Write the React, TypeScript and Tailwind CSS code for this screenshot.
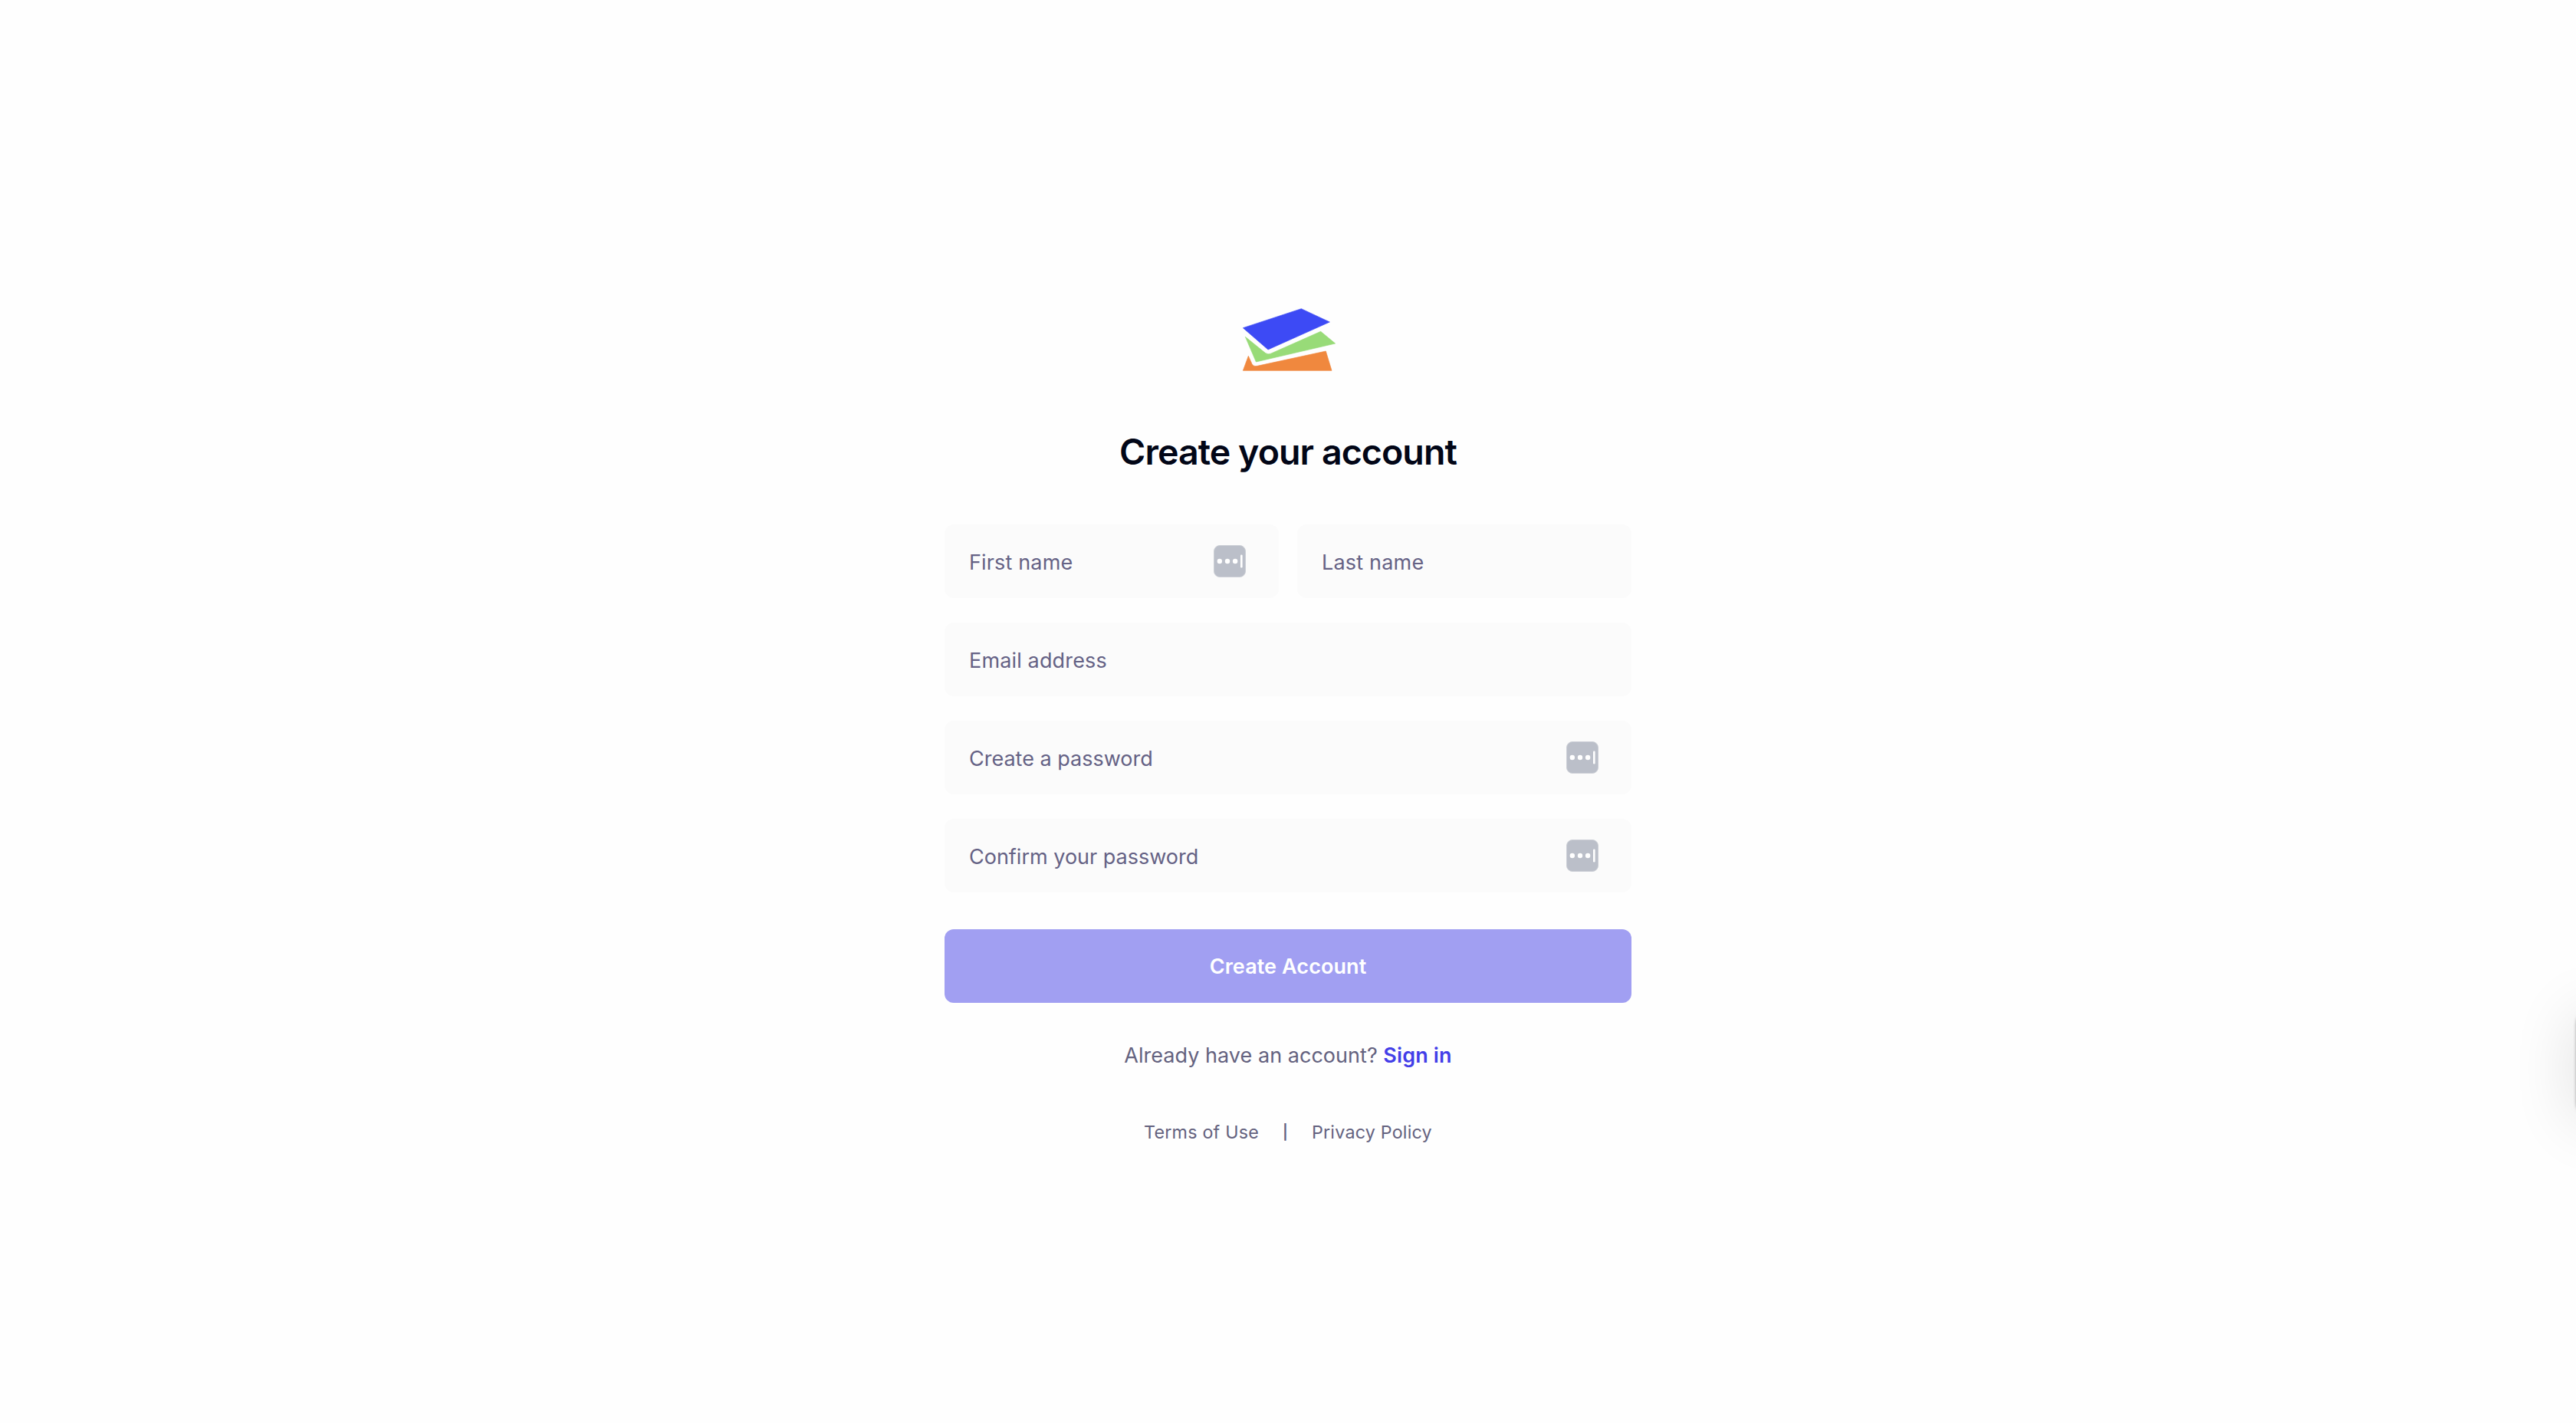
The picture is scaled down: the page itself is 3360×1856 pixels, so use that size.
import React from "react";

function Logo() {
  return (
    <svg viewBox="0 0 480 360" className="h-[120px] w-[160px]" aria-hidden="true">
      <path d="M64 143 L292 68 L403 120 L162 228 Z" fill="#3d4af5" stroke="#3d4af5" strokeWidth="2" strokeLinejoin="round" />
      <path d="M73 178 L151 241 Q162 249 174 243 L368 157 L425 204 L115 276 Z" fill="#98db78" stroke="#98db78" strokeWidth="2" strokeLinejoin="round" />
      <path d="M85 253 L99 284 Q105 295 120 292 L388 234 L411 310 L64 310 Z" fill="#f0883e" stroke="#f0883e" strokeWidth="2" strokeLinejoin="round" />
    </svg>
  );
}

function PasswordManagerIcon() {
  return (
    <svg viewBox="0 0 42 42" className="h-[42px] w-[42px] shrink-0" aria-hidden="true">
      <rect x="0.5" y="0.5" width="41" height="41" rx="7.5" fill="#bbbfc9" stroke="#cccfd6" />
      <circle cx="7.8" cy="21" r="3.2" fill="#fff" />
      <circle cx="18" cy="21" r="3.2" fill="#fff" />
      <circle cx="28.1" cy="21" r="3.2" fill="#fff" />
      <rect x="35" y="12.5" width="2.6" height="17" rx="1.2" fill="#fff" />
    </svg>
  );
}

function Field({ label, icon, tracking = "" }: { label: string; icon?: boolean; tracking?: string }) {
  return (
    <label className="flex h-24 flex-1 items-center justify-between rounded-xl bg-[#fbfbfb] pr-[43px] pl-8">
      <span className={`pt-[3px] text-[27px] leading-[41px] text-[#656285] ${tracking}`}>{label}</span>
      {icon && <PasswordManagerIcon />}
    </label>
  );
}

export default function App() {
  return (
    <main className="relative flex h-[1856px] w-full flex-col items-center overflow-hidden bg-[#fefefe] pt-[380px] font-['Inter',sans-serif]">
      <Logo />
      <h1 className="mt-[61px] text-[46.5px] leading-14 font-semibold tracking-[-0.93px] text-[#020617]">Create your account</h1>

      <form className="mt-[67px] flex w-[896px] flex-col">
        <div className="flex flex-col gap-8">
          <div className="flex gap-6">
            <Field label="First name" icon tracking="tracking-[0.15px]" />
            <Field label="Last name" tracking="tracking-[0.2px]" />
          </div>
          <div className="flex">
            <Field label="Email address" tracking="tracking-[0.15px]" />
          </div>
          <div className="flex">
            <Field label="Create a password" icon />
          </div>
          <div className="flex">
            <Field label="Confirm your password" icon />
          </div>
        </div>
        <button type="button" className="mt-12 h-24 rounded-xl bg-[#a19ff2] pt-px text-[27px] leading-[41px] font-semibold tracking-[0.08px] text-white">
          Create Account
        </button>
      </form>

      <p className="mt-12 text-[27px] leading-[41px] tracking-[0.03px] text-[#64627f]">
        Already have an account? <a className="font-semibold tracking-[0.12px] text-[#433ee8]">Sign in</a>
      </p>

      <footer className="mt-[63px] flex gap-8 text-[23.25px] leading-[33px] tracking-[0.22px] text-[#64627f]">
        <a>Terms of Use</a>
        <span className="flex w-[5px] justify-center text-[19px] font-semibold">|</span>
        <a>Privacy Policy</a>
      </footer>

      <aside className="absolute top-[1316px] -right-[61px] h-[142px] w-[60px] rounded-[20px] bg-white shadow-[0_0_4px_rgba(0,0,0,0.5),0_6px_84px_rgba(0,0,0,0.14)]" />
    </main>
  );
}
